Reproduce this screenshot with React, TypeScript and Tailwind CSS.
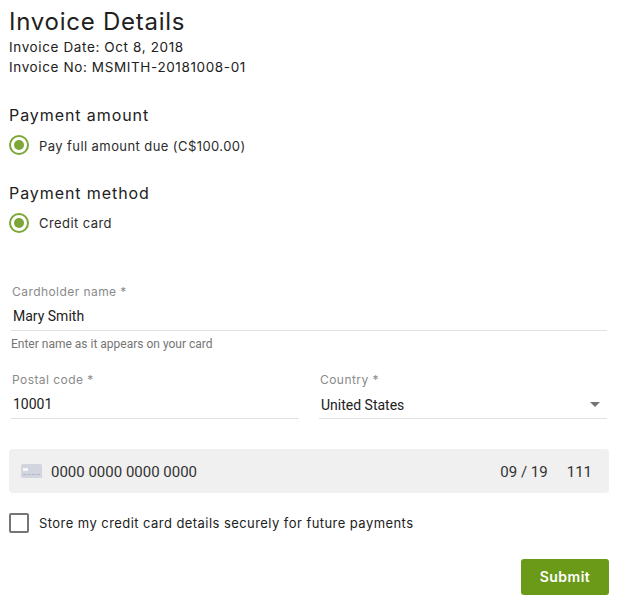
import { useState } from "react";
import type { ReactNode } from "react";

const RadioOption = ({ name, children }: { name: string; children: ReactNode }) => (
  <label className="flex h-5 cursor-pointer items-center">
    <input type="radio" name={name} defaultChecked className="sr-only" />
    <span className="flex h-5 w-5 shrink-0 items-center justify-center rounded-full border-2 border-[#7ca736]">
      <span className="h-2.5 w-2.5 rounded-full bg-[#7ca736]" />
    </span>
    <span className="ml-2.5 text-[13px] leading-5 tracking-[0.42px] text-[#2b2b2b]">{children}</span>
  </label>
);

const FieldLabel = ({ children }: { children: ReactNode }) => (
  <div className="h-4 pl-px text-xs leading-4 tracking-[0.44px] text-[#8a8a8a]">{children}</div>
);

const CardIcon = () => (
  <svg width="21" height="14" viewBox="0 0 21 14" className="shrink-0">
    <rect width="21" height="14" rx="1.5" fill="#d2d5de" />
    <rect x="2" y="4" width="5" height="3" rx="0.5" fill="#f7f8fa" />
    <path d="M2 10.5h3.5M6.5 10.5h3.5M11 10.5h3.5M15.5 10.5h3.5" stroke="#b1b8ca" />
  </svg>
);

const App = () => {
  const [store, setStore] = useState(false);

  return (
    <div className="h-[608px] w-[618px] overflow-hidden bg-white px-[9px] font-[Inter,sans-serif] text-[#212121]">
      <h1 className="pt-1.5 text-2xl leading-[31px] tracking-[0.75px]">Invoice Details</h1>
      <p className="text-[13.5px] leading-5 tracking-[0.62px]">Invoice Date: Oct 8, 2018</p>
      <p className="text-[13.5px] leading-5 tracking-[0.62px]">Invoice No: MSMITH-20181008-01</p>

      <h2 className="mt-[26px] text-base leading-6 tracking-[0.92px]">Payment amount</h2>
      <div className="mt-2 [&_label>span:last-child]:pt-0.5">
        <RadioOption name="amount">Pay full amount due (C$100.00)</RadioOption>
      </div>

      <h2 className="mt-[26px] text-base leading-6 tracking-[0.92px]">Payment method</h2>
      <div className="mt-2">
        <RadioOption name="method">Credit card</RadioOption>
      </div>

      <div className="mt-[51px] px-0.5">
        <FieldLabel>Cardholder name *</FieldLabel>
        <div className="h-[31px] border-b border-[#e0e0e0] pt-1.5 pl-0.5 font-[Roboto,sans-serif] text-sm leading-5">
          Mary Smith
        </div>
        <p className="mt-[5px] font-[Roboto,sans-serif] text-xs leading-4 text-[#757575]">
          Enter name as it appears on your card
        </p>

        <div className="mt-5 grid grid-cols-2 gap-5">
          <div>
            <FieldLabel>Postal code *</FieldLabel>
            <div className="h-[31px] border-b border-[#e0e0e0] pt-1.5 pl-0.5 font-[Roboto,sans-serif] text-sm leading-5">
              10001
            </div>
          </div>
          <div>
            <FieldLabel>Country *</FieldLabel>
            <div className="flex h-[31px] justify-between border-b border-[#e0e0e0] pt-[7px] pr-[7px] pl-0.5 font-[Roboto,sans-serif] text-sm leading-5">
              <span>United States</span>
              <svg width="10" height="5" viewBox="0 0 10 5" className="mt-[7px]">
                <path d="M0 0h10L5 5z" fill="#757575" />
              </svg>
            </div>
          </div>
        </div>
      </div>

      <div className="mt-[30px] flex h-11 items-center rounded-[4px] bg-[#f0f0f0] pr-[17px] pl-3 font-[Roboto,sans-serif] text-[15px] text-[#333]">
        <CardIcon />
        <span className="ml-[9px] flex-1 pt-0.5">0000 0000 0000 0000</span>
        <span className="pt-0.5">09 / 19</span>
        <span className="ml-[19px] pt-0.5">111</span>
      </div>

      <label className="mt-5 flex h-5 cursor-pointer items-center">
        <input type="checkbox" checked={store} onChange={() => setStore(!store)} className="sr-only" />
        <span className="h-5 w-5 shrink-0 rounded-[2px] border-2 border-[#757575]" />
        <span className="ml-2.5 pt-0.5 text-[13px] tracking-[0.44px] text-[#212121]">
          Store my credit card details securely for future payments
        </span>
      </label>

      <div className="mt-[26px] flex justify-end">
        <button className="h-9 w-[88px] rounded-[3px] bg-[#6a9a18] text-sm font-semibold tracking-[0.5px] text-white">
          Submit
        </button>
      </div>
    </div>
  );
};

export default App;
